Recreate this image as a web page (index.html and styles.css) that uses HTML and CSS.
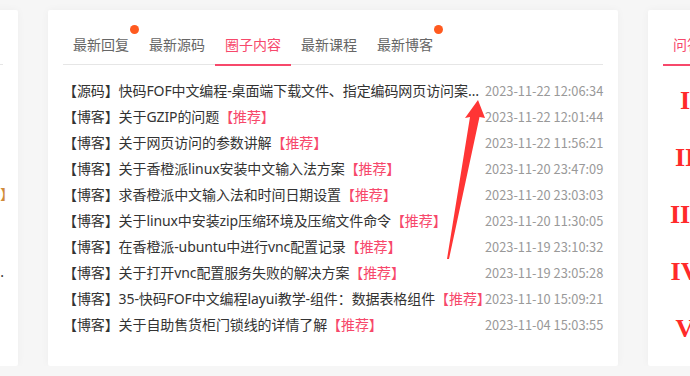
FILE: index.html
```html
<!DOCTYPE html>
<html lang="zh-CN">
<head>
    <meta charset="UTF-8">
    <meta name="viewport" content="width=device-width, initial-scale=1.0">
    <title>圈子内容</title>
    <link rel="stylesheet" href="styles.css">
</head>
<body>
    <div class="page">
        <aside class="card side-left">
            <div class="tabs"></div>
            <ul class="stub-list">
                <li></li>
                <li></li>
                <li></li>
                <li></li>
                <li class="stub-mark">】</li>
                <li></li>
                <li></li>
                <li class="stub-dot">.</li>
            </ul>
        </aside>

        <section class="card main">
            <div class="tabs">
                <span class="tab has-dot">最新回复</span>
                <span class="tab">最新源码</span>
                <span class="tab active">圈子内容</span>
                <span class="tab">最新课程</span>
                <span class="tab has-dot">最新博客</span>
            </div>
            <ul class="news-list">
                <li class="news-item">
                    <a href="#" class="news-title">【源码】快码FOF中文编程-桌面端下载文件、指定编码网页访问案例与源码分享</a>
                    <span class="news-time">2023-11-22 12:06:34</span>
                </li>
                <li class="news-item">
                    <a href="#" class="news-title">【博客】关于GZIP的问题<span class="hot">【推荐】</span></a>
                    <span class="news-time">2023-11-22 12:01:44</span>
                </li>
                <li class="news-item">
                    <a href="#" class="news-title">【博客】关于网页访问的参数讲解<span class="hot">【推荐】</span></a>
                    <span class="news-time">2023-11-22 11:56:21</span>
                </li>
                <li class="news-item">
                    <a href="#" class="news-title">【博客】关于香橙派linux安装中文输入法方案<span class="hot">【推荐】</span></a>
                    <span class="news-time">2023-11-20 23:47:09</span>
                </li>
                <li class="news-item">
                    <a href="#" class="news-title">【博客】求香橙派中文输入法和时间日期设置<span class="hot">【推荐】</span></a>
                    <span class="news-time">2023-11-20 23:03:03</span>
                </li>
                <li class="news-item">
                    <a href="#" class="news-title">【博客】关于linux中安装zip压缩环境及压缩文件命令<span class="hot">【推荐】</span></a>
                    <span class="news-time">2023-11-20 11:30:05</span>
                </li>
                <li class="news-item">
                    <a href="#" class="news-title">【博客】在香橙派-ubuntu中进行vnc配置记录<span class="hot">【推荐】</span></a>
                    <span class="news-time">2023-11-19 23:10:32</span>
                </li>
                <li class="news-item">
                    <a href="#" class="news-title">【博客】关于打开vnc配置服务失败的解决方案<span class="hot">【推荐】</span></a>
                    <span class="news-time">2023-11-19 23:05:28</span>
                </li>
                <li class="news-item">
                    <a href="#" class="news-title">【博客】35-快码FOF中文编程layui教学-组件：数据表格组件<span class="hot">【推荐】</span></a>
                    <span class="news-time">2023-11-10 15:09:21</span>
                </li>
                <li class="news-item">
                    <a href="#" class="news-title">【博客】关于自助售货柜门锁线的详情了解<span class="hot">【推荐】</span></a>
                    <span class="news-time">2023-11-04 15:03:55</span>
                </li>
            </ul>
        </section>

        <aside class="card side-right">
            <div class="tabs">
                <span class="tab active">问答</span>
            </div>
            <ol class="rank-list">
                <li>I</li>
                <li>II</li>
                <li>III</li>
                <li>IV</li>
                <li>V</li>
            </ol>
        </aside>
    </div>

    <svg class="arrow" width="690" height="376" viewBox="0 0 690 376">
        <polygon points="478,100 485,118 479.5,117 449,259 447,259 470,117 465,118" fill="#ff3535"/>
    </svg>
</body>
</html>
```

FILE: styles.css
```css
:root {
    --page-bg: #f6f6f6;
    --card-bg: #ffffff;
    --text: #333333;
    --text-muted: #666666;
    --time: #999999;
    --accent: #f7486b;
    --dot: #ff5a1f;
    --roman: #ff2a2a;
    --line: #e6e6e6;
}

* {
    margin: 0;
    padding: 0;
    box-sizing: border-box;
}

body {
    background: var(--page-bg);
    font-family: "Noto Sans", "Noto Sans CJK SC", sans-serif;
    color: var(--text);
    overflow: hidden;
}

ul, ol {
    list-style: none;
}

.page {
    display: flex;
    gap: 30px;
    padding-top: 10px;
    margin-left: -182px;
}

.card {
    background: var(--card-bg);
    height: 356px;
    padding: 15px;
    border-radius: 2px;
    box-shadow: 0 0 8px rgba(0, 0, 0, 0.04);
    flex-shrink: 0;
}

.side-left {
    width: 200px;
}

.main {
    width: 570px;
}

.side-right {
    width: 300px;
}

/* tabs */
.tabs {
    display: flex;
    height: 40px;
    border-bottom: 1px solid var(--line);
}

.tab {
    position: relative;
    padding: 0 10px;
    line-height: 39px;
    font-size: 14px;
    font-family: "Noto Sans CJK SC", sans-serif;
    color: var(--text-muted);
    white-space: nowrap;
}

.tab.active {
    color: var(--accent);
}

.tab.active::after {
    content: '';
    position: absolute;
    left: 0;
    right: 0;
    bottom: -2px;
    height: 2px;
    background: var(--accent);
}

.has-dot::before {
    content: '';
    position: absolute;
    top: 0;
    right: 0;
    width: 9px;
    height: 9px;
    border-radius: 50%;
    background: var(--dot);
}

/* list */
.news-list {
    margin-top: 12px;
}

.news-item {
    display: flex;
    align-items: center;
    height: 26px;
    font-size: 14px;
}

.news-title {
    flex: 1;
    min-width: 0;
    color: var(--text);
    text-decoration: none;
    letter-spacing: -0.1px;
    white-space: nowrap;
    overflow: hidden;
    text-overflow: ellipsis;
}

.hot {
    color: var(--accent);
    margin-right: -8px;
}

.news-time {
    flex-shrink: 0;
    width: 118px;
    text-align: right;
    color: var(--time);
    font-family: "Noto Sans CJK SC", sans-serif;
    font-size: 12.8px;
    white-space: nowrap;
}

/* left stub */
.stub-list {
    margin-top: 12px;
}

.stub-list li {
    height: 26px;
    font-size: 14px;
    line-height: 26px;
    text-align: right;
    margin-right: -11px;
}

.stub-mark {
    color: #d08a3a;
}

.stub-dot {
    color: #333;
    margin-right: -1px !important;
}

/* right ranking */
.rank-list {
    margin-left: 7px;
    padding-top: 17px;
    width: 30px;
}

.rank-list li {
    height: 57px;
    font-family: "Liberation Serif", "DejaVu Serif", serif;
    font-weight: 700;
    font-size: 26px;
    line-height: 38px;
    text-align: center;
    color: var(--roman);
}

.arrow {
    position: absolute;
    top: 0;
    left: 0;
    pointer-events: none;
}
```
